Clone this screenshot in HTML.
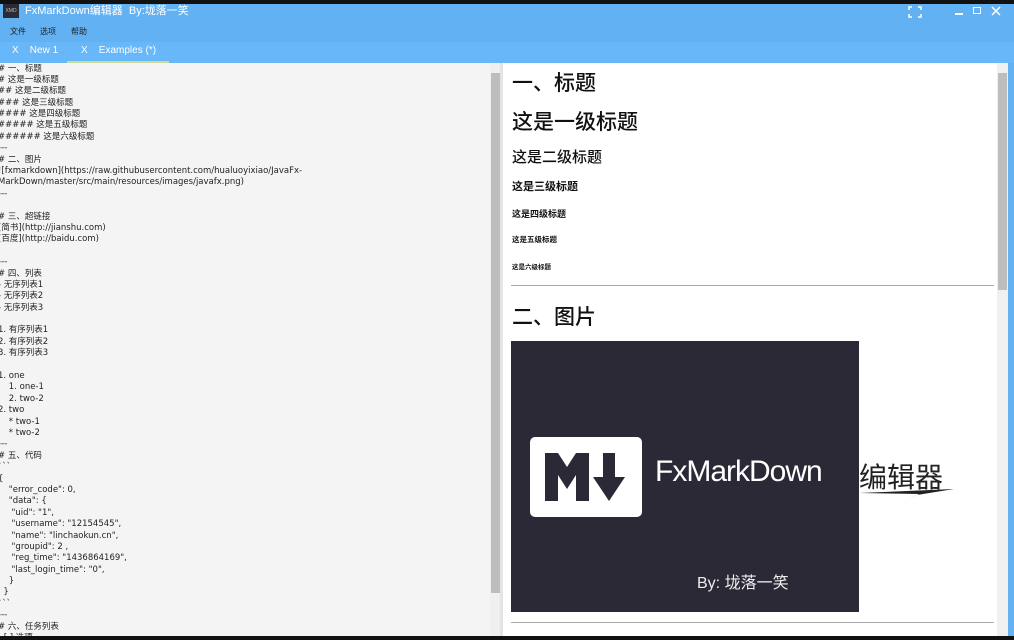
<!DOCTYPE html>
<html><head><meta charset="utf-8"><style>
*{margin:0;padding:0;box-sizing:border-box}
body{width:1014px;height:640px;overflow:hidden;background:#111;font-family:"Liberation Sans","Noto Sans CJK SC",sans-serif;position:relative}
.abs{position:absolute}
#title{left:0;top:4px;width:1014px;height:38px;background:#62b1f3}
#tabs{left:0;top:42px;width:1014px;height:21px;background:#67b7f9}
#ed{left:0;top:63px;width:490px;height:573px;background:#f4f4f4;overflow:hidden}
#ed pre{font-family:"DejaVu Sans","Noto Sans CJK SC",sans-serif;font-size:8.5px;line-height:11.39px;color:#222;position:absolute;left:-2px;top:0.5px;white-space:pre}
#prev{left:503px;top:63px;width:494px;height:573px;background:#fff;overflow:hidden}
#prev div{position:absolute;left:9px;color:#111;white-space:nowrap;font-weight:bold}
</style></head><body>
<div class="abs" id="title">
 <div class="abs" style="left:3px;top:0;width:16px;height:14px;background:#2b2b35;color:#bbb;font-size:5px;line-height:14px;text-align:center">XMD</div>
 <div class="abs" style="left:25px;top:-1px;color:#fff;font-size:11px;line-height:16px">FxMarkDown编辑器&nbsp; By:垅落一笑</div>
 <div class="abs" style="left:10px;top:22px;color:#222;font-size:8px">文件</div>
 <div class="abs" style="left:40px;top:22px;color:#222;font-size:8px">选项</div>
 <div class="abs" style="left:71px;top:22px;color:#222;font-size:8px">帮助</div>
 <svg class="abs" style="left:908px;top:2px" width="14" height="12" viewBox="0 0 14 12" fill="none" stroke="#fff" stroke-width="1.5"><path d="M1 4V1h3M10 1h3v3M13 8v3h-3M4 11H1V8"/></svg>
 <div class="abs" style="left:955px;top:9px;width:8px;height:1.5px;background:#fff"></div>
 <div class="abs" style="left:973px;top:3px;width:8px;height:7px;border:1.5px solid #fff"></div>
 <svg class="abs" style="left:991px;top:2px" width="10" height="10" viewBox="0 0 10 10" stroke="#fff" stroke-width="1.5"><path d="M1 1L9 9M9 1L1 9"/></svg>
</div>
<div class="abs" id="tabs">
 <div class="abs" style="left:12px;top:3px;color:#fff;font-size:10px">X&nbsp;&nbsp;&nbsp; New 1</div>
 <div class="abs" style="left:81px;top:3px;color:#fff;font-size:10px">X&nbsp;&nbsp;&nbsp; Examples (*)</div>
 <div class="abs" style="left:67px;top:19px;width:102px;height:2px;background:#c9d99a"></div>
</div>
<div class="abs" id="ed"><pre># 一、标题
# 这是一级标题
## 这是二级标题
### 这是三级标题
#### 这是四级标题
##### 这是五级标题
###### 这是六级标题
---
# 二、图片
![fxmarkdown](https://raw.githubusercontent.com/hualuoyixiao/JavaFx-
MarkDown/master/src/main/resources/images/javafx.png)
---

# 三、超链接
[简书](http://jianshu.com)
[百度](http://baidu.com)

---
# 四、列表
- 无序列表1
- 无序列表2
- 无序列表3

1. 有序列表1
2. 有序列表2
3. 有序列表3

1. one
    1. one-1
    2. two-2
2. two
    * two-1
    * two-2
---
# 五、代码
&#96;&#96;&#96;
{
    "error_code": 0,
    "data": {
     "uid": "1",
     "username": "12154545",
     "name": "linchaokun.cn",
     "groupid": 2 ,
     "reg_time": "1436864169",
     "last_login_time": "0",
    }
  }
&#96;&#96;&#96;
---
# 六、任务列表
- [ ] 选项</pre></div>
<div class="abs" style="left:490px;top:63px;width:10px;height:573px;background:#f0f0f0"></div>
<div class="abs" style="left:491px;top:73px;width:9px;height:520px;background:#bdbdbd"></div>
<div class="abs" style="left:500px;top:63px;width:3px;height:573px;background:#e4e4e4"></div>
<div class="abs" id="prev">
 <div style="top:4px;font-size:21px;font-weight:500">一、标题</div>
 <div style="top:43px;font-size:21px;font-weight:500">这是一级标题</div>
 <div style="top:83px;font-size:15px;font-weight:500">这是二级标题</div>
 <div style="top:115px;font-size:11px">这是三级标题</div>
 <div style="top:144px;font-size:9px">这是四级标题</div>
 <div style="top:171px;font-size:7.5px">这是五级标题</div>
 <div style="top:198px;font-size:6.5px">这是六级标题</div>
 <div style="top:222px;left:8px;width:483px;height:1px;background:#aaa"></div>
 <div style="top:238px;font-size:21px;font-weight:500">二、图片</div>
 <div style="top:278px;left:8px;width:348px;height:271px;background:#2a2935">
  <div style="left:19px;top:96px;width:112px;height:80px;background:#fff;border-radius:5px"></div>
  <svg style="position:absolute;left:34px;top:112px" width="88" height="50" viewBox="0 0 88 50"><path fill="#2a2935" d="M0 0h13l9 14 9-14h13v48h-13V22l-9 14-9-14v26H0z"/><path fill="#2a2935" d="M58 0h12v24h10L64 48 48 24h10z"/></svg>
  <div style="left:144px;top:114px;color:#fff;font-size:30px;font-weight:normal;letter-spacing:-1px">FxMarkDown</div>
  <div style="left:186px;top:228px;color:#eee;font-size:16px;font-weight:normal">By:&nbsp;垅落一笑</div>
 </div>
 <div style="left:356px;top:393px;color:#222;font-size:28px;font-weight:normal;background:#fff">编辑器</div>
 <svg style="position:absolute;left:356px;top:423px" width="95" height="16"><path d="M0 7L95 3 58 9 45 15 60 8z" fill="#222"/></svg>
 <div style="top:559px;left:8px;width:483px;height:1px;background:#aaa"></div>
</div>
<div class="abs" style="left:997px;top:63px;width:11px;height:573px;background:#f0f0f0"></div>
<div class="abs" style="left:998px;top:73px;width:9px;height:217px;background:#bdbdbd"></div>
<div class="abs" style="left:1008px;top:63px;width:6px;height:573px;background:#64b2f2"></div>
</body></html>
